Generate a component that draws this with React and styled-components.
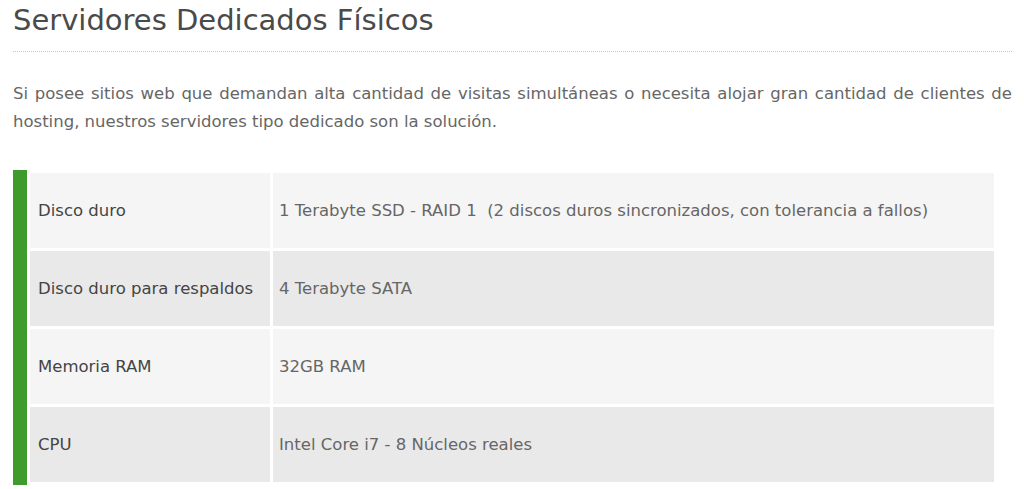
import React from "react";
import styled, { createGlobalStyle } from "styled-components";

const Global = createGlobalStyle`
  html, body { margin: 0; padding: 0; background: #fff; }
  body { font-family: "DejaVu Sans", "Liberation Sans", Arial, sans-serif; }
`;

const Page = styled.div`
  width: 999px;
  padding-left: 13px;
`;

const Title = styled.h2`
  margin: 0;
  font-size: 29px;
  line-height: 40px;
  font-weight: 400;
  color: #4a4a4a;
  padding-bottom: 11px;
  border-bottom: 1px dotted #c8c8c8;
`;

const Lead = styled.p`
  margin: 28px 0 34px;
  font-size: 16.5px;
  line-height: 28px;
  color: #666;
  text-align: justify;
`;

const Specs = styled.table`
  width: 984px;
  border-collapse: separate;
  border-spacing: 3px;
  border-left: 14px solid #3f9b2c;
  font-size: 16.5px;
`;

const Row = styled.tr`
  height: 75px;
  background: ${(p) => (p.$alt ? "#e9e9e9" : "#f5f5f5")};
`;

const Label = styled.td`
  width: 224px;
  padding: 0 8px;
  color: #444;
  vertical-align: middle;
`;

const Value = styled.td`
  padding: 0 6px;
  color: #666;
  vertical-align: middle;
`;

const rows = [
  ["Disco duro", "1 Terabyte SSD - RAID 1\u00a0 (2 discos duros sincronizados, con tolerancia a fallos)"],
  ["Disco duro para respaldos", "4 Terabyte SATA"],
  ["Memoria RAM", "32GB RAM"],
  ["CPU", "Intel Core i7 - 8 Núcleos reales"],
];

export default function App() {
  return (
    <Page>
      <Global />
      <Title>Servidores Dedicados Físicos</Title>
      <Lead>
        Si posee sitios web que demandan alta cantidad de visitas simultáneas o necesita alojar gran cantidad de clientes de hosting, nuestros servidores tipo dedicado son la solución.
      </Lead>
      <Specs>
        <tbody>
          {rows.map(([k, v], i) => (
            <Row key={k} $alt={i % 2 === 1}>
              <Label>{k}</Label>
              <Value>{v}</Value>
            </Row>
          ))}
        </tbody>
      </Specs>
    </Page>
  );
}
